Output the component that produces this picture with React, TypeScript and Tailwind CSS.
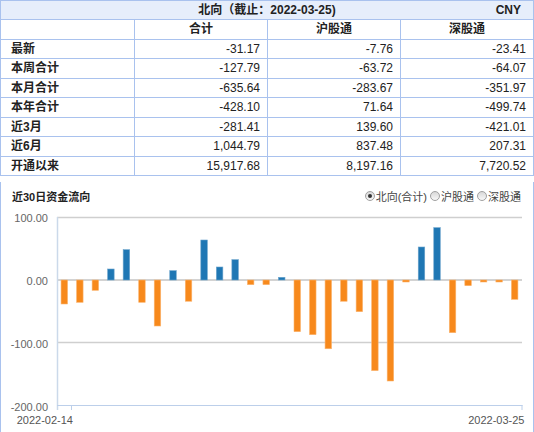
import React from 'react';

/* ===== 表格数据 ===== */
const ROWS: [string, string, string, string][] = [
  ['最新', '-31.17', '-7.76', '-23.41'],
  ['本周合计', '-127.79', '-63.72', '-64.07'],
  ['本月合计', '-635.64', '-283.67', '-351.97'],
  ['本年合计', '-428.10', '71.64', '-499.74'],
  ['近3月', '-281.41', '139.60', '-421.01'],
  ['近6月', '1,044.79', '837.48', '207.31'],
  ['开通以来', '15,917.68', '8,197.16', '7,720.52'],
];

/* ===== 近30日 北向(合计) ===== */
const FLOW = [
  -38.4, -35.7, -16.5, 17.6, 48.5, -35.7, -73.6, 14.9, -34, 64, 20.8, 32.5, -7.5, -7.5, 4.3,
  -82.7, -87.5, -110, -34, -50.7, -145, -161.6, -3.2, 52.8, 83.7, -84.3, -9.1, -3.2, -3.2, -30.9,
];

const ZERO = 280;
const PX = 0.625; // 100 = 62.5px

const FONT = { fontFamily: '"Liberation Sans", "Noto Sans CJK SC", sans-serif' };

function Radio({ checked, label }: { checked?: boolean; label: string }) {
  return (
    <span className="flex items-center">
      <span className="w-[10px] h-[10px] rounded-full border border-[#a0a0a0] bg-gradient-to-b from-[#d8d8d8] to-[#f8f8f8] flex items-center justify-center -mt-[2px]">
        {checked && <span className="w-[4px] h-[4px] rounded-full bg-[#333]" />}
      </span>
      <span className="ml-px text-[11px] text-[#444]">{label}</span>
    </span>
  );
}

function Chart() {
  return (
    <svg width={532} height={220} viewBox="1 212 532 220" className="block">
      {/* 网格 */}
      {[217.5, 342.5].map((y) => (
        <line key={y} x1={57} x2={522} y1={y} y2={y} stroke="#cfcfcf" strokeWidth={1.5} />
      ))}
      <line x1={57} x2={522} y1={ZERO} y2={ZERO} stroke="#c4c4c4" strokeWidth={1.5} />
      {/* 坐标轴 */}
      <line x1={57.5} x2={57.5} y1={217} y2={410} stroke="#cbd9ea" strokeWidth={1.5} />
      <line x1={57} x2={522.5} y1={405.5} y2={405.5} stroke="#bccfea" strokeWidth={1.2} />
      <line x1={71.5} x2={71.5} y1={405} y2={410} stroke="#bccfea" strokeWidth={1} />
      <line x1={522} x2={522} y1={405} y2={410} stroke="#bccfea" strokeWidth={1} />

      {/* 纵轴标签 */}
      {[
        ['100.00', 222],
        ['0.00', 284.5],
        ['-100.00', 347.5],
        ['-200.00', 410.5],
      ].map(([t, y]) => (
        <text key={t} x={48} y={y as number} textAnchor="end" fontSize={11} fill="#666" style={FONT}>
          {t}
        </text>
      ))}

      {/* 柱 */}
      {FLOW.map((v, i) => {
        const cx = 64.3 + 15.53 * i;
        const h = Math.abs(v) * PX;
        const y = v >= 0 ? ZERO - h : ZERO;
        return (
          <rect
            key={i}
            x={cx - 3.25}
            y={y}
            width={6.5}
            height={h}
            fill={v >= 0 ? '#1f77b4' : '#f7891c'}
            stroke={v >= 0 ? '#6aa3cc' : '#fbb571'}
            strokeWidth={0.6}
          />
        );
      })}

      {/* 横轴标签 */}
      <text x={73} y={423.5} textAnchor="end" fontSize={11} fill="#555" style={FONT}>
        2022-02-14
      </text>
      <text x={524.5} y={423.5} textAnchor="end" fontSize={11} fill="#555" style={FONT}>
        2022-03-25
      </text>
    </svg>
  );
}

export default function App() {
  return (
    <div className="w-[534px] h-[432px] overflow-hidden bg-white text-[#222] text-[12px]" style={FONT}>
      {/* 表格 */}
      <div className="border border-[#a9c2ee]">
        <div className="relative h-[19px] bg-[#e6eefb] border-b border-[#a9c2ee] flex items-center justify-center font-bold">
          北向（截止：2022-03-25)
          <span className="absolute right-[12px] top-0 h-full flex items-center">CNY</span>
        </div>
        <div className="grid grid-cols-4 h-[18.5px] box-content border-b border-[#a9c2ee] font-bold">
          <div />
          <div className="border-l border-[#a9c2ee] flex items-center justify-center">合计</div>
          <div className="border-l border-[#a9c2ee] flex items-center justify-center">沪股通</div>
          <div className="border-l border-[#a9c2ee] flex items-center justify-center">深股通</div>
        </div>
        {ROWS.map((r, i) => (
          <div
            key={r[0]}
            className={`grid grid-cols-4 h-[18.5px] box-content ${i < ROWS.length - 1 ? 'border-b border-[#a9c2ee]' : ''}`}
          >
            <div className="flex items-center pl-[10px] font-bold">{r[0]}</div>
            {r.slice(1).map((v, j) => (
              <div key={j} className="border-l border-[#a9c2ee] flex items-center justify-end pr-[7px]">
                {v}
              </div>
            ))}
          </div>
        ))}
      </div>

      {/* 近30日资金流向 */}
      <div className="border-l border-r border-[#a9c2ee] h-[256px]">
        <div className="flex items-center justify-between h-[30px] mt-[6px] pl-[11px] pr-[12px]">
          <span className="font-bold text-[11px]">近30日资金流向</span>
          <div className="flex items-center gap-[3px]">
            <Radio checked label="北向(合计)" />
            <Radio label="沪股通" />
            <Radio label="深股通" />
          </div>
        </div>
        <Chart />
      </div>
    </div>
  );
}
